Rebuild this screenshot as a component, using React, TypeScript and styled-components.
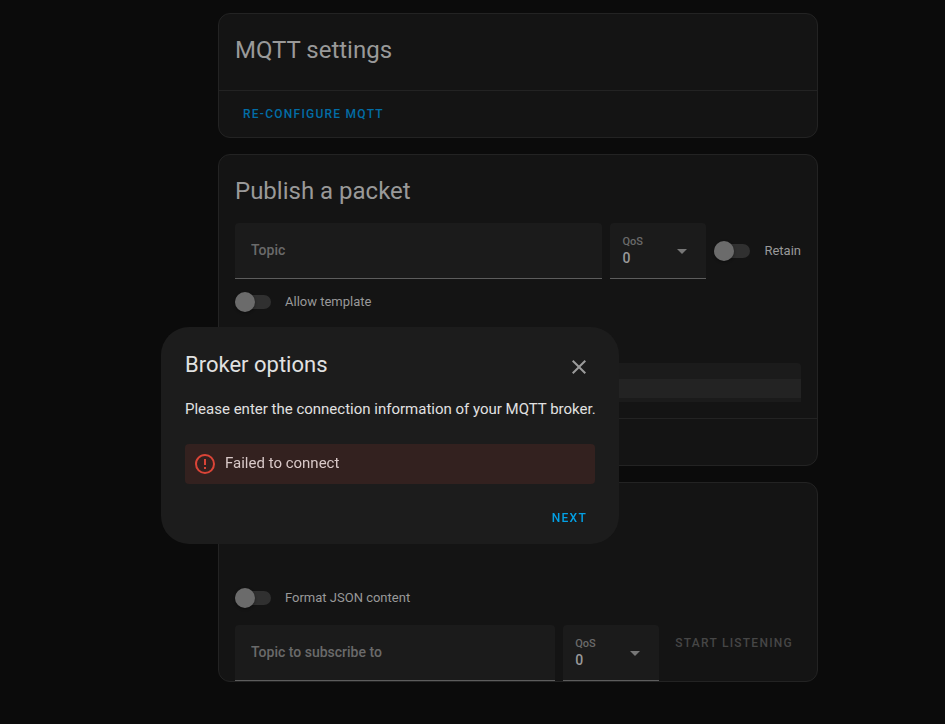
import React from "react";
import styled, { createGlobalStyle } from "styled-components";

const GlobalStyle = createGlobalStyle`
  * { box-sizing: border-box; }
  body {
    margin: 0;
    background: #0b0b0b;
    color: #999999;
    font-family: Roboto, "Liberation Sans", sans-serif;
    font-size: 14px;
  }
`;

const Page = styled.main`
  display: flex;
  flex-direction: column;
  gap: 16px;
  min-height: 100vh;
  padding: 13px 127px 42px 218px;
`;

const Card = styled.section`
  display: flex;
  flex-direction: column;
  border: 1px solid #232323;
  border-radius: 12px;
  background: #141414;
`;

const CardTitle = styled.h1<{ $compact?: boolean }>`
  margin: 0;
  padding: 12px 16px ${(p) => (p.$compact ? 8 : 16)}px;
  font-size: 24px;
  font-weight: 400;
  line-height: 48px;
`;

const CardContent = styled.div<{ $top?: number; $bottom?: number }>`
  padding: ${(p) => p.$top ?? 0}px 16px ${(p) => p.$bottom ?? 0}px;
`;

const CardActions = styled.div`
  display: flex;
  min-height: 47px;
  padding: 5px 16px;
  border-top: 1px solid #232323;
`;

const TextButton = styled.button`
  height: 36px;
  padding: 0 8px;
  border: 0;
  border-radius: 4px;
  background: transparent;
  color: #026da6;
  font-family: inherit;
  font-size: 12px;
  font-weight: 500;
  letter-spacing: 1.25px;
  text-transform: uppercase;
  white-space: nowrap;
  cursor: pointer;

  &:disabled {
    color: #464646;
    cursor: default;
  }
`;

const FieldRow = styled.div<{ $align?: string }>`
  display: flex;
  align-items: ${(p) => p.$align ?? "center"};
  gap: 8px;
`;

const TextField = styled.input`
  flex: 1;
  min-width: 0;
  height: 56px;
  padding: 0 16px 2px;
  border: 0;
  border-bottom: 1px solid #5d5d5d;
  border-radius: 4px 4px 0 0;
  outline: 0;
  background: #1b1b1b;
  color: #999999;
  font-family: inherit;
  font-size: 14px;
  font-weight: 500;

  &::placeholder {
    color: #6a6a6a;
    opacity: 1;
  }
`;

const SelectField = styled.label`
  display: grid;
  grid-template-columns: 1fr 24px;
  align-items: center;
  flex: none;
  width: 96px;
  height: 56px;
  padding: 0 12px;
  border-bottom: 1px solid #5d5d5d;
  border-radius: 4px 4px 0 0;
  background: #1b1b1b;
`;

const SelectText = styled.span`
  display: flex;
  flex-direction: column;
  color: #6a6a6a;
  font-size: 11px;
  font-weight: 500;
  line-height: 16px;
`;

const NativeSelect = styled.select`
  height: 18px;
  padding: 0 0 2px;
  border: 0;
  outline: 0;
  appearance: none;
  background: transparent;
  color: #999999;
  font-family: inherit;
  font-size: 14px;
  font-weight: 500;
`;

const SwitchLabel = styled.label<{ $height?: number }>`
  display: flex;
  align-items: center;
  gap: 14px;
  height: ${(p) => p.$height ?? 56}px;
  font-size: 13px;
  white-space: nowrap;
`;

const SwitchText = styled.span`
  padding-bottom: 2px;
`;

const SwitchInput = styled.input`
  display: flex;
  align-items: center;
  flex: none;
  width: 36px;
  height: 14px;
  margin: 0;
  border-radius: 7px;
  appearance: none;
  background: #303030;

  &::before {
    content: "";
    width: 20px;
    height: 20px;
    border-radius: 50%;
    background: #6b6b6b;
    box-shadow: 0 1px 3px rgba(0, 0, 0, 0.4);
  }

  &:checked {
    justify-content: flex-end;
  }
`;

const Editor = styled.div`
  height: 39px;
  margin-top: 38px;
  padding: 16px 0 4px;
  border-radius: 4px 4px 0 0;
  background: #1b1b1b;
`;

const EditorLine = styled.div`
  height: 19px;
  background: #232323;
`;

const Dialog = styled.div`
  position: fixed;
  top: 327px;
  left: 161px;
  display: flex;
  flex-direction: column;
  width: 458px;
  padding: 12px 24px 8px;
  border-radius: 28px;
  background: #1c1c1c;
  color: #e1e1e1;
  font-size: 15px;
`;

const DialogHeader = styled.header`
  display: flex;
  align-items: center;
  justify-content: space-between;
  height: 56px;
`;

const DialogTitle = styled.h2`
  margin: 0;
  padding-bottom: 4px;
  font-size: 22px;
  font-weight: 400;
  line-height: 28px;
`;

const IconButton = styled.button`
  display: flex;
  padding: 4px;
  border: 0;
  background: transparent;
  color: #9b9b9b;
  cursor: pointer;
`;

const DialogText = styled.p`
  margin: 3px 0 24px;
  line-height: 22px;
  white-space: nowrap;
`;

const Alert = styled.div`
  display: flex;
  align-items: center;
  gap: 8px;
  height: 40px;
  padding: 0 8px;
  border-radius: 4px;
  background: #33211f;
  color: #d9c9c8;
`;

const AlertText = styled.span`
  padding-bottom: 2px;
`;

const DialogActions = styled.footer`
  display: flex;
  justify-content: flex-end;
  padding-top: 16px;
`;

const NextButton = styled(TextButton)`
  color: #03a0e4;
`;

const ICONS = {
  close:
    "M19,6.41L17.59,5L12,10.59L6.41,5L5,6.41L10.59,12L5,17.59L6.41,19L12,13.41L17.59,19L19,17.59L13.41,12L19,6.41Z",
  alert:
    "M11,15H13V17H11V15M11,7H13V13H11V7M12,2C6.47,2 2,6.5 2,12A10,10 0 0,0 12,22A10,10 0 0,0 22,12A10,10 0 0,0 12,2M12,20A8,8 0 0,1 4,12A8,8 0 0,1 12,4A8,8 0 0,1 20,12A8,8 0 0,1 12,20Z",
  arrow: "M7,10L12,15L17,10Z",
};

function Icon({ name, color = "currentColor" }: { name: keyof typeof ICONS; color?: string }) {
  return (
    <svg width="24" height="24" viewBox="0 0 24 24" fill={color} aria-hidden="true">
      <path d={ICONS[name]} />
    </svg>
  );
}

function QosSelect() {
  return (
    <SelectField>
      <SelectText>
        QoS
        <NativeSelect defaultValue="0">
          <option>0</option>
          <option>1</option>
          <option>2</option>
        </NativeSelect>
      </SelectText>
      <Icon name="arrow" color="#777777" />
    </SelectField>
  );
}

function Switch({ label, height }: { label: string; height?: number }) {
  return (
    <SwitchLabel $height={height}>
      <SwitchInput type="checkbox" role="switch" />
      <SwitchText>{label}</SwitchText>
    </SwitchLabel>
  );
}

export default function App() {
  return (
    <>
      <GlobalStyle />
      <Page>
        <Card>
          <CardTitle>MQTT settings</CardTitle>
          <CardActions>
            <TextButton>Re-configure MQTT</TextButton>
          </CardActions>
        </Card>

        <Card>
          <CardTitle $compact>Publish a packet</CardTitle>
          <CardContent $bottom={16}>
            <FieldRow>
              <TextField placeholder="Topic" aria-label="Topic" />
              <QosSelect />
              <Switch label="Retain" />
            </FieldRow>
            <Switch label="Allow template" height={46} />
            <Editor>
              <EditorLine />
            </Editor>
          </CardContent>
          <CardActions />
        </Card>

        <Card>
          <CardContent $top={88}>
            <Switch label="Format JSON content" height={54} />
            <FieldRow $align="flex-start">
              <TextField placeholder="Topic to subscribe to" aria-label="Topic to subscribe to" />
              <QosSelect />
              <TextButton disabled>Start listening</TextButton>
            </FieldRow>
          </CardContent>
        </Card>
      </Page>

      <Dialog role="dialog" aria-labelledby="dialog-title">
        <DialogHeader>
          <DialogTitle id="dialog-title">Broker options</DialogTitle>
          <IconButton aria-label="Close">
            <Icon name="close" />
          </IconButton>
        </DialogHeader>
        <DialogText>Please enter the connection information of your MQTT broker.</DialogText>
        <Alert role="alert">
          <Icon name="alert" color="#db4437" />
          <AlertText>Failed to connect</AlertText>
        </Alert>
        <DialogActions>
          <NextButton>Next</NextButton>
        </DialogActions>
      </Dialog>
    </>
  );
}
